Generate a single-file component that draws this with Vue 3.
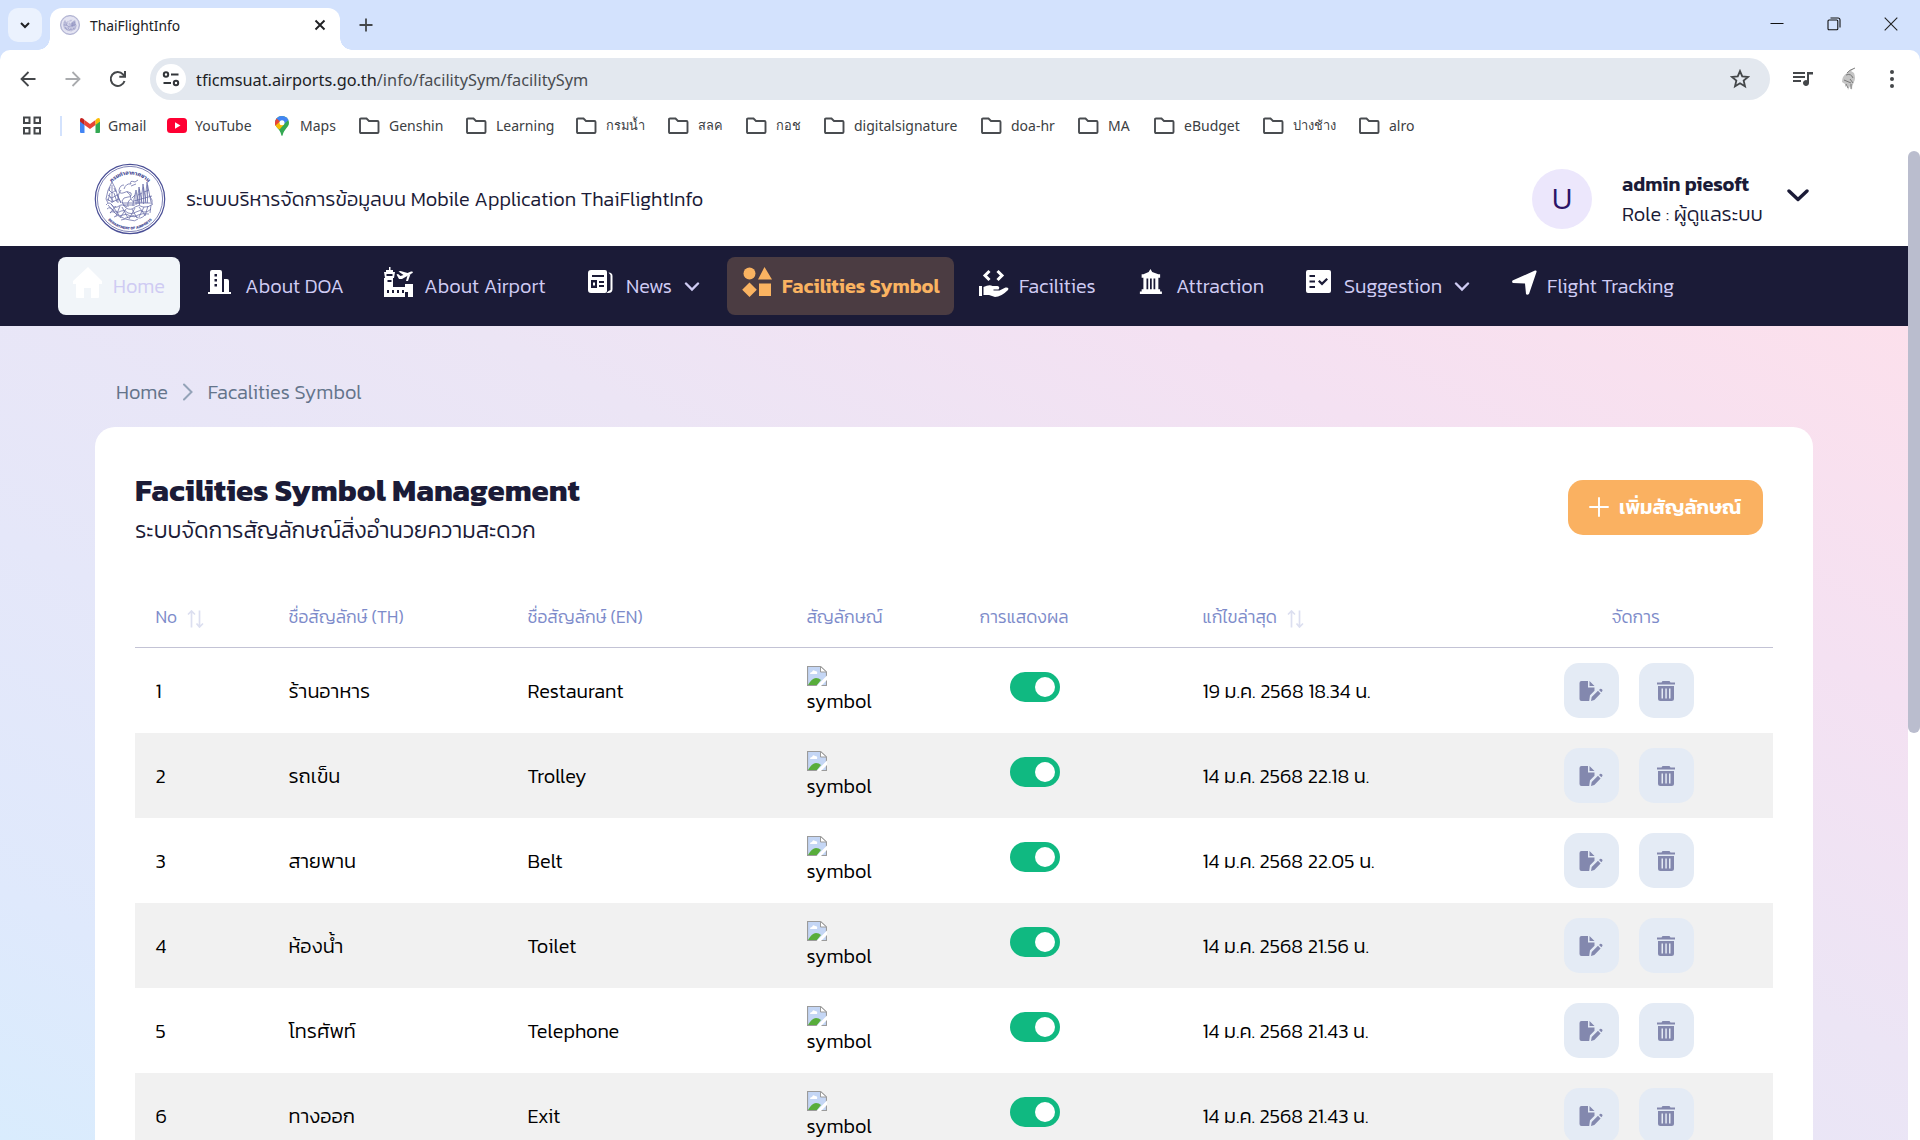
<script setup>
const bookmarks = [
  ['mail', 'Gmail', 79], ['yt', 'YouTube', 166], ['map', 'Maps', 271], ['f', 'Genshin', 358], ['f', 'Learning', 465], ['f', 'กรมน้ำ', 575],
  ['f', 'สลค', 667], ['f', 'กอช', 745], ['f', 'digitalsignature', 823], ['f', 'doa-hr', 980], ['f', 'MA', 1077], ['f', 'eBudget', 1153], ['f', 'ปางช้าง', 1262], ['f', 'alro', 1358],
].map((b, i, a) => ({ icon: b[0], label: b[1], thai: /[\u0e00-\u0e7f]/.test(b[1]), w: (a[i + 1]?.[2] ?? 1450) - b[2] }))
const nav = [
  { id: 'home', label: 'Home' },
  { id: 'doa', label: 'About DOA' },
  { id: 'airport', label: 'About Airport' },
  { id: 'news', label: 'News', drop: true },
  { id: 'sym', label: 'Facilities Symbol' },
  { id: 'fac', label: 'Facilities' },
  { id: 'att', label: 'Attraction' },
  { id: 'sug', label: 'Suggestion', drop: true },
  { id: 'fly', label: 'Flight Tracking' },
]
const rows = [
  ['ร้านอาหาร', 'Restaurant', '19 ม.ค. 2568 18.34 น.'],
  ['รถเข็น', 'Trolley', '14 ม.ค. 2568 22.18 น.'],
  ['สายพาน', 'Belt', '14 ม.ค. 2568 22.05 น.'],
  ['ห้องน้ำ', 'Toilet', '14 ม.ค. 2568 21.56 น.'],
  ['โทรศัพท์', 'Telephone', '14 ม.ค. 2568 21.43 น.'],
  ['ทางออก', 'Exit', '14 ม.ค. 2568 21.43 น.'],
]
</script>

<template>
  <div class="window">
    <div class="tabs">
      <div class="tabmenu"><svg width="12" height="12" viewBox="0 0 12 12"><path d="M2 4l4 4 4-4" fill="none" stroke="#202124" stroke-width="2"/></svg></div>
      <div class="tab">
        <svg class="fav" width="20" height="20" viewBox="0 0 72 72"><circle cx="36" cy="36" r="34" fill="#e4e4f2"/><use href="#seal"/></svg>
        <span>ThaiFlightInfo</span>
        <svg class="tx" width="12" height="12" viewBox="0 0 12 12"><path d="M1.500 1.500l9 9M10.500 1.500l-9 9" stroke="#202124" stroke-width="1.900"/></svg>
      </div>
      <svg class="plus" width="14" height="14" viewBox="0 0 14 14"><path d="M7 .5v13M.5 7h13" stroke="#44474a" stroke-width="1.800"/></svg>
      <div class="winbtns">
        <svg width="14" height="14" viewBox="0 0 14 14"><path d="M.5 6.500h13" stroke="#111"/></svg>
        <svg width="14" height="14" viewBox="0 0 14 14" fill="none" stroke="#111" stroke-width="1.100"><rect x="1" y="3" width="9.800" height="9.800" rx="1"/><path d="M3.500 1H11q2 0 2 2v7.500"/></svg>
        <svg width="14" height="14" viewBox="0 0 14 14"><path d="M.7.700l12.600 12.600M13.300.700L.700 13.300" stroke="#222" stroke-width="1.100"/></svg>
      </div>
    </div>
    <div class="toolwrap">
      <div class="toolbar">
        <svg class="b1" width="16" height="16" viewBox="0 0 16 16" fill="none" stroke="#44474a" stroke-width="1.800"><path d="M15.500 8H2M8.500 1L1.500 8l7 7"/></svg>
        <svg class="b2" width="16" height="16" viewBox="0 0 16 16" fill="none" stroke="#a9abae" stroke-width="1.800"><path d="M.5 8H14M7.500 1l7 7-7 7"/></svg>
        <svg class="b3" width="18" height="18" viewBox="0 0 18 18" fill="none" stroke="#44474a" stroke-width="2"><path d="M15.500 11A7 7 0 1 1 14 4.300L16 6.500M16 1v5.700h-5.700"/></svg>
        <div class="omni">
          <div class="site"><svg width="18" height="18" viewBox="0 0 18 18" fill="none" stroke="#33363a" stroke-width="2"><circle cx="4" cy="4.500" r="2.200"/><path d="M9 4.500h7.500M1.500 13H9"/><circle cx="14" cy="13" r="2.200"/></svg></div>
          <span class="url">tficmsuat.airports.go.th<i>/info/facilitySym/facilitySym</i></span>
          <svg class="star" width="20" height="20" viewBox="0 0 24 24" fill="none" stroke="#44474a" stroke-width="2.200"><path d="M12 2.500l2.700 6.400 6.900.6-5.200 4.500 1.600 6.800-6-3.600-6 3.600 1.600-6.800-5.200-4.500 6.900-.6z"/></svg>
        </div>
        <svg class="music" width="20" height="16" viewBox="0 0 20 16" fill="#44474a"><path d="M0 1h12v2H0zM0 5h12v2H0zM0 9h8v2H0z"/><path d="M14 1h6v2.500h-4V12a3 3 0 1 1-2-2.800z"/></svg>
        <svg class="av" width="20" height="24" viewBox="0 0 20 24"><path d="M16 1q-6 2-8 5-5 3-5 9l3 2v3l2-2 1 5 2-4 2 4q0-5 2-8 2-4 0-9l-3-2z" fill="#c4c4c4"/><path d="M16 1q-6 2-8 5M7 8q5-2 7 3M5 13l7 3M7 17l2 4M11 12l3 4M12 17v5" stroke="#666" stroke-width=".8" fill="none"/></svg>
        <svg class="dots" width="4" height="18" viewBox="0 0 4 18" fill="#44474a"><circle cx="2" cy="2" r="2"/><circle cx="2" cy="9" r="2"/><circle cx="2" cy="16" r="2"/></svg>
      </div>
    </div>
    <div class="marks">
      <svg class="apps" width="18" height="19" viewBox="0 0 18 19" fill="none" stroke="#44474a" stroke-width="2"><path d="M1 1.500h5.500V7H1zM11.500 1.500H17V7h-5.500zM1 12h5.500v5.500H1zM11.500 12H17v5.500h-5.500z"/></svg>
      <div class="sep"></div>
      <div v-for="b in bookmarks" :key="b.label" :class="['mark', { thai: b.thai }, b.icon]" :style="{ width: b.w + 'px' }">
        <svg v-if="b.icon === 'mail'" width="20" height="15" viewBox="0 0 20 15"><path d="M0 3v11q0 1 1 1h3.500V6z" fill="#4285f4"/><path d="M20 3v11q0 1-1 1h-3.500V6z" fill="#34a853"/><path d="M4.500 2v5L10 11l5.500-4V2L10 6z" fill="#ea4335"/><path d="M0 2q0-3 3-1.500L4.500 2v5L0 3.500z" fill="#c5221f"/><path d="M20 2q0-3-3-1.500L15.500 2v5L20 3.500z" fill="#fbbc04"/></svg>
        <svg v-else-if="b.icon === 'yt'" width="20" height="15" viewBox="0 0 20 15"><rect width="20" height="15" rx="3.500" fill="#f03"/><path d="M8 4.300v6.400l5.500-3.200z" fill="#fff"/></svg>
        <svg v-else-if="b.icon === 'map'" class="pin" width="20" height="20" viewBox="0 0 20 20"><path d="M10 0C6 0 3 3 3 6.800c0 4.700 5 6 6.300 12.200q.7 2 1.400 0C12 13 17 11.500 17 6.800 17 3 14 0 10 0z" fill="#34a853"/><path d="M4.500 2.500Q7-.5 11.500.200 15 1 16.500 4L7.500 12q-4-2-4.500-6z" fill="#4285f4"/><path d="M4.600 2.500L8 5.500 3.500 10Q2 6 4.600 2.500z" fill="#ea4335"/><path d="M3.500 9.500L8 5.500l4 3L7.500 13.500Q4.500 11.500 3.500 9.500z" fill="#fbbc04"/><circle cx="10" cy="6.700" r="2.500" fill="#fff"/></svg>
        <svg v-else width="21" height="17" viewBox="0 0 21 17"><path d="M2 1.500h5.500l2.500 2.500h8.500q1 0 1 1v10q0 1-1 1H2q-1 0-1-1V2.500q0-1 1-1z" fill="none" stroke="#494c50" stroke-width="1.900"/></svg>
        <span>{{ b.label }}</span>
      </div>
    </div>

    <div class="viewport">
      <div class="page">
        <header>
          <svg class="logo" width="72" height="72" viewBox="0 0 72 72">
            <defs>
              <path id="arcTop" d="M11.500 36a24.500 24.500 0 0 1 49 0"/><path id="arcBot" d="M5.500 36a30.500 30.500 0 0 0 61 0"/>
              <g id="seal" fill="none" stroke="#4a4f96">
                <circle cx="36" cy="36" r="34.700" stroke-width="1.200"/><circle cx="36" cy="36" r="32.600" stroke-width=".7"/>
                <g stroke-width=".75" opacity=".85">
                  <path d="M18 19q-5 8-6 17l2 4M18 19q4 6 6 15l3 6M18 22v18M15 27l3 3 4-3M14 32l4 3 5-3M13 36l5 3 7-3M27 27q-4 5-3 13M23 31l4 9M20 25l2 4M16 24l-1 4M16 30l-2 8M20 30l3 9M16 34l4 5"/>
                  <path d="M33 44q-5-2-5-6 1-4 6-4 4 0 3-4-4-3-8 0-4 1-4-3 1-5 5-5M30 26q2-6 7-5-2-4 4-2l3-2M37 23l5-2M33 29q4 2 4 7-4 2-3 8M37 36q3 2 2 7"/>
                  <path d="M39 41l3-14 3 14M43 41l2-17 3 16M47 40l2-19 3 19M51 40l2-21 4 20M42 30v12M45.500 26v16M49.500 24v17M53.500 22v18M38 35l3-3M44 32l4-2M50 29l5-2M40 38l18-5M40 40h18M55 32l3 5v4"/>
                  <path d="M12 42q3-4 6 0 3 4 7 1 4-3 7 2 5 3 9-1 4-3 8 0 5 1 10-3M13 46q3-3 6 1 4 4 8 1 4-2 7 2 5 2 8-1 4-3 8 0 3 1 7-3M16 50q3-3 6 1 4 3 7 1 4-2 7 1 5 2 8-1 4-2 11-1M20 54q4-3 7 0t8 0 8 0 8-2M27 57q4-2 9 0t8-1"/>
                  <path d="M14 42l7 8M17 41l8 11M22 43l-6 7M26 43l-4 10M28 44l6 11M32 46l-6 9M38 46l5 9M41 45l-6 11M45 44l6 8M50 44l-5 10M54 43l-3 10M57 42l-1 8M28 40h10M29 42h12"/>
                </g>
              </g>
            </defs>
            <use href="#seal"/>
            <text class="sealtext"><textPath href="#arcTop" startOffset="50%" text-anchor="middle">กรมท่าอากาศยาน</textPath></text>
            <text class="sealtext en"><textPath href="#arcBot" startOffset="50%" text-anchor="middle">DEPARTMENT OF AIRPORTS</textPath></text>
          </svg>
          <span class="sys">ระบบบริหารจัดการข้อมูลบน Mobile Application ThaiFlightInfo</span>
          <div class="avatar">U</div>
          <div class="who"><b>admin piesoft</b><span>Role : ผู้ดูแลระบบ</span></div>
          <svg class="chev" width="22" height="14" viewBox="0 0 22 14"><path d="M2 2l9 8.500L20 2" fill="none" stroke="#1b1b37" stroke-width="3.400" stroke-linecap="round" stroke-linejoin="round"/></svg>
        </header>
        <nav>
          <div v-for="n in nav" :key="n.id" :class="['item', n.id]">
            <svg width="32" height="32" viewBox="0 0 32 32" fill="currentColor">
              <path v-if="n.id === 'home'" d="M17 0L2 14v3h3v13q0 1 1 1h7V21h7v10h7q1 0 1-1V17h3v-3z"/>
              <g v-else-if="n.id === 'doa'"><path transform="translate(0 1)" fill-rule="evenodd" d="M4 24V4q0-2 2-2h8q2 0 2 2v20h2V11h3q2 0 2 2v11h2v2H2v-2zM8.500 6v2.500H11V6zm0 5v2.500H11V11zm0 5v2.500H11V16z"/></g>
              <g v-else-if="n.id === 'airport'"><path fill-rule="evenodd" d="M6 0h1.500v3H10v2h2l-1 6h-1v9h12v-3h8v13h-5v-5h-3v5H1V11h1L1 5h2V3h3zM3.500 7v2h6V7zm1 6v2h4v-2zM4 23v3h2v-3zm5 0v3h2v-3zm5 0v3h2v-3zm5 0v3h2v-3z"/><path d="M13.500 7.500l1.500-.5 2.500 2 3-1-5-3.500 2-.5 7 2 3.500-1.500q3-.5 1.500 1.500L19 12h-3z"/><path d="M24.500 8.500l3-1.500-2.500 7h-2z"/></g>
              <g v-else-if="n.id === 'news'"><path transform="translate(0 1)" fill-rule="evenodd" d="M5 2h14q2 0 2 2v19q0 2-2 2H5q-3 0-3-3V5q0-3 3-3zM6 7v2h12V7zm-1 5v8h6v-8zm8 1v2h5v-2zm0 4v2h5v-2zM7 14.500h2v3H7z"/><path d="M22.500 5.500q4 0 4 3.500v13q0 4-4 4h-2l2-2 2-1V8z"/></g>
              <g v-else-if="n.id === 'sym'"><circle cx="9.500" cy="6.500" r="6"/><path d="M24.500 0L32 12.500H18zM9.500 15.500l7.300 7.300-7.300 7.300-7.300-7.300zM19 16.500h12V29H19z"/></g>
              <g v-else-if="n.id === 'fac'"><path d="M10.500 4L6 8.500l4.500 4.500M18.500 4L23 8.500 18.500 13" fill="none" stroke="currentColor" stroke-width="3"/><path d="M0 19h3v10H0zM4.500 20q6-3 9-1h5q3 1 1 3.500h-5v1h6l6-3q4-.5 2.500 2.500-7 7-13 7l-6-2H4.500z"/></g>
              <g v-else-if="n.id === 'att'"><path transform="translate(0 2) scale(.88 .96)" d="M13 0l2 3 7 2.500h2V9h-2v12h2v2.500h2V26H1v-2.500h2V21h2V9H3V5.500h2L11 3zM8.500 10v11h2V10zm4 0v11h2V10zm4 0v11h2V10z" fill-rule="evenodd"/></g>
              <g v-else-if="n.id === 'sug'"><path fill-rule="evenodd" d="M4 3h21q2 0 2 2v19q0 2-2 2H4q-2 0-2-2V5q0-2 2-2zM5.500 8v2H11V8zm0 5.500v2H11v-2zm0 5.500v2H11v-2zM14 14.500l4 4 6-6-1.600-1.600-4.400 4.400-2.400-2.400z"/></g>
              <path v-else d="M1.500 13.500L24 3.500q2-.5 1.500 1.500L18 27q-2 1.500-3 0l-1-10.500-12-.5q-1.500-.5-.5-2.500z"/>
            </svg>
            <span>{{ n.label }}</span>
            <svg v-if="n.drop" class="dd" width="16" height="10" viewBox="0 0 16 10"><path d="M2 1.500l6 6 6-6" fill="none" stroke="#cfcbf3" stroke-width="2.400" stroke-linecap="round"/></svg>
          </div>
        </nav>
        <main>
          <div class="crumb"><span>Home</span><svg width="10" height="18" viewBox="0 0 10 18"><path d="M1 1.500L8.500 9 1 16.500" fill="none" stroke="#94a3b8" stroke-width="2" stroke-linecap="round"/></svg><span>Facalities Symbol</span></div>
          <section class="card">
            <div class="top">
              <div><h1>Facilities Symbol Management</h1><p>ระบบจัดการสัญลักษณ์สิ่งอำนวยความสะดวก</p></div>
              <button><svg width="20" height="20" viewBox="0 0 20 20"><path d="M10 1v18M1 10h18" stroke="#fff" stroke-width="1.900" stroke-linecap="round"/></svg><span>เพิ่มสัญลักษณ์</span></button>
            </div>
            <div class="grid head">
              <div>No <svg class="sort" width="18" height="18" viewBox="0 0 18 18"><path d="M4.500 17.500V1M1 4.500L4.500 1 8 4.500M12.500.500V17M9.500 13.500l3 3.500 3.500-3.500"/></svg></div>
              <div>ชื่อสัญลักษ์ (TH)</div><div>ชื่อสัญลักษ์ (EN)</div><div>สัญลักษณ์</div><div>การแสดงผล</div>
              <div>แก้ไขล่าสุด <svg class="sort" width="18" height="18" viewBox="0 0 18 18"><path d="M4.500 17.500V1M1 4.500L4.500 1 8 4.500M12.500.500V17M9.500 13.500l3 3.500 3.500-3.500"/></svg></div>
              <div class="manage">จัดการ</div>
            </div>
            <div v-for="(r, i) in rows" :key="i" class="grid row">
              <div>{{ i + 1 }}</div><div>{{ r[0] }}</div><div>{{ r[1] }}</div>
              <div class="symcell">
                <svg width="20" height="20" viewBox="0 0 20 20"><path d="M.500.500h13L19.500 6v13.500H.5z" fill="#c4d6f5" stroke="#9b9b9b" stroke-width="1.200"/><path d="M13.500.500V6h6z" fill="#fff" stroke="#9b9b9b"/><path d="M3 8q0-2 2-2 1-3 3-1 3 0 2 3z" fill="#fff"/><path d="M1 19q4-7 8-7 3 0 5 2l-4 5z" fill="#58ad3b"/><path d="M9.500 20L20 9.500V14l-6 6z" fill="#fff"/></svg>
                <span>symbol</span>
              </div>
              <div class="tgl"><i></i></div>
              <div>{{ r[2] }}</div>
              <div class="acts">
                <a><svg width="24" height="22" viewBox="0 0 24 22" fill="#8388ae"><path d="M2.500 1H9v6.500h6.500v3.300L11 15.300 10.200 21H2.500Q.500 21 .500 19V3q0-2 2-2z"/><path d="M10.500 1l5 5h-5zM12 21l.7-4 6.300-6.200 2.600 2.600L15.300 20zM20 10l1-1q1-.7 2 .3t.2 2l-.900.900z"/></svg></a>
                <a><svg width="18" height="22" viewBox="0 0 18 22" fill="#8388ae"><path d="M5.500 1h7l1 1.500H18v2H0v-2h4.500z"/><path fill-rule="evenodd" d="M1 6h16v12.500q0 2.500-2.500 2.500h-11Q1 21 1 18.500zM4.500 8.500v10H6v-10zm3.800 0v10h1.500v-10zm3.700 0v10h1.500v-10z"/></svg></a>
              </div>
            </div>
          </section>
        </main>
      </div>
      <div class="scroll"><div></div></div>
    </div>
  </div>
</template>

<style>
html, body { margin: 0; overflow: hidden; }
</style>
<style scoped>
* { box-sizing: border-box; }
svg { flex: none; display: block; }
.window { width: 1920px; height: 1140px; overflow: hidden; display: flex; flex-direction: column; background: #fff; font-family: Kanit, "Noto Sans", "Noto Sans Thai", sans-serif; font-weight: 300; font-size: 20px; color: #1b1b37; white-space: nowrap; }
.tabs { height: 50px; flex: none; background: #d3e2fd; display: flex; align-items: flex-start; }
.tabmenu { width: 34px; height: 34px; margin: 8px 0 0 8px; border-radius: 10px; background: #ebf2fe; display: flex; align-items: center; justify-content: center; }
.tab { position: relative; width: 290px; height: 42px; margin: 8px 0 0 8px; background: #fff; border-radius: 12px 12px 0 0; display: flex; align-items: center; padding: 0 14px 8px 10px; font: 13.800px "Noto Sans", sans-serif; color: #202124; }
.tab::before, .tab::after { content: ""; position: absolute; bottom: 0; width: 12px; height: 12px; }
.tab::before { right: 100%; background: radial-gradient(circle at 0 0, transparent 11.500px, #fff 12px); }
.tab::after { left: 100%; background: radial-gradient(circle at 100% 0, transparent 11.500px, #fff 12px); }
.tab span { margin-left: 10px; flex: 1; }
.plus { margin: 18px 0 0 19px; }
.winbtns { margin: 17px 22px 0 auto; display: flex; gap: 43px; }
.toolwrap { background: #d3e2fd; flex: none; }
.toolbar { height: 50px; display: flex; align-items: center; padding-top: 8px; background: #fff; border-radius: 10px 10px 0 0; }
.b1 { margin-left: 20px; } .b2 { margin-left: 29px; } .b3 { margin-left: 28px; }
.omni { margin-left: 23px; width: 1620px; height: 42px; border-radius: 21px; background: #e3e8ef; display: flex; align-items: center; padding: 0 20px 0 6px; flex: none; }
.site { width: 30px; height: 30px; border-radius: 50%; background: #fff; display: flex; align-items: center; justify-content: center; }
.url { margin-left: 10px; font: 16.300px "Noto Sans", sans-serif; color: #202124; flex: 1; padding-top: 1px; }
.url i { font-style: normal; color: #494c50; }
.music { margin-left: 23px; } .av { margin-left: 26px; } .dots { margin-left: 31px; }
.marks { height: 51px; flex: none; display: flex; align-items: center; font: 14px "Noto Sans", sans-serif; color: #3c4043; }
.apps { margin-left: 23px; } .sep { width: 2px; height: 20px; background: #d3e2fd; margin: 0 18px 0 19px; }
.mark { display: flex; align-items: center; flex: none; } .mark span { margin-left: 9px; }
.mark.mail span, .mark.yt span, .mark.map span { margin-left: 8px; }
.mark.thai { font-size: 12.800px; }
.viewport { height: 989px; display: flex; }
.page { width: 1908px; background: #fff; }
.scroll { width: 12px; background: #fff; } .scroll div { height: 582px; background: #babdce; border-radius: 6px; }
header { height: 95px; display: flex; align-items: center; padding-left: 94px; }
.sealtext { font-size: 5.500px; fill: #4a4f96; font-weight: bold; } .sealtext.en { font-size: 3.900px; }
.sys { margin-left: 20px; flex: 1; padding-top: 1px; }
.avatar { width: 60px; height: 60px; border-radius: 50%; background: #ece7fc; color: #2c1466; display: flex; align-items: center; justify-content: center; font-size: 30px; font-weight: 300; }
.who { margin-left: 30px; width: 165px; line-height: 30px; display: flex; flex-direction: column; padding-top: 1px; }
.who b { font-weight: 600; }
.chev { margin-right: 99px; margin-top: -5px; }
nav { height: 80px; background: #1b1b37; display: flex; padding-top: 11px; }
.item { height: 58px; border-radius: 8px; color: #fff; display: flex; flex: none; padding: 10px 0 0 13px; }
.item span { color: #cfcbf3; line-height: 29px; margin: 5px 0 0 8px; }
.home { width: 122px; margin-left: 58px; background: #f1f5f9; } .home span { margin-left: 10px; }
.doa { width: 165px; margin-left: 13px; } .doa span { margin-left: 7px; }
.airport { width: 188px; margin-left: 12px; } .airport span { margin-left: 9px; }
.news { width: 139px; margin-left: 15px; }
.sym { width: 227px; margin-left: 15px; background: #4b3c42; color: #fab361; } .sym span { color: #fab361; font-weight: 600; margin-left: 10px; }
.fac { width: 145px; margin-left: 12px; }
.att { width: 155px; margin-left: 15px; } .att span { margin-left: 5px; }
.sug { width: 196px; margin-left: 10px; }
.fly { width: 188px; margin-left: 11px; } .fly span { margin-left: 4px; }
.dd { margin: 15px 0 0 12px; }
main { height: 814px; padding: 45px 95px 0; background: linear-gradient(27deg, #d9ecfd 0%, #dfe9fc 14%, #e5e7f9 34%, #ece5f5 59%, #f4e1f2 79%, #fce0ec 100%); }
.crumb { display: flex; align-items: center; height: 42px; padding-left: 21px; color: #64748b; gap: 15px; }
.card { margin-top: 14px; height: 760px; border-radius: 20px; background: #fff; padding: 53px 40px 0; }
.top { display: flex; justify-content: space-between; height: 121px; }
h1 { font-size: 31.250px; line-height: 42px; margin: -11px 0 0; font-weight: 700; } p { font-size: 22.500px; line-height: 34px; margin: 2px 0; }
button { width: 195px; height: 55px; margin-right: 10px; border: 0; border-radius: 15px; background: #fab161; color: #fff; display: flex; align-items: center; padding: 0 0 1px 21px; gap: 10px; font: 600 20px Kanit, "Noto Sans", "Noto Sans Thai", sans-serif; }
.grid { display: grid; grid-template-columns: 133px 239px 279px 173px 223px 361px 1fr; padding-left: 20.500px; align-items: center; }
.head { height: 47px; border-bottom: 1px solid #c3c3d5; padding-bottom: 14px; font-size: 17.500px; color: #7d8bca; }
.head > div { display: flex; align-items: center; gap: 10px; }
.head .manage { margin-left: 48px; }
.sort { fill: none; stroke: #dcdff0; stroke-width: 1.700; margin-top: 3px; }
.row { height: 85px; color: #000; } .row:nth-child(2n) { background: #f1f1f1; } .row:nth-child(2n+1) { background: #fff; }
.symcell span { line-height: 30px; display: block; }
.tgl i { display: block; width: 50px; height: 30px; border-radius: 15px; background: #10b981; margin: -8px 0 0 30px; padding: 5px 0 0 25px; }
.tgl i::after { content: ""; display: block; width: 20px; height: 20px; border-radius: 50%; background: #fff; }
.acts { display: flex; gap: 20px; } .acts a { width: 55px; height: 55px; border-radius: 15px; background: #e4ebf5; display: flex; align-items: center; justify-content: center; }
.acts svg { margin-left: -1px; }
</style>
